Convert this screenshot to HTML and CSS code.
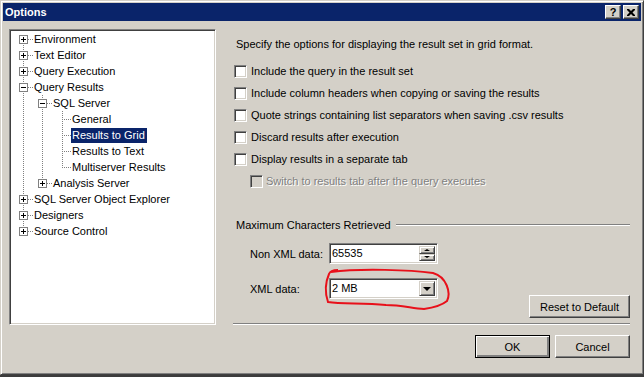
FILE: index.html
```html
<!doctype html>
<html>
<head>
  <link rel="stylesheet" href="styles.css">
</head>
<body>
  <div class="window">
    <div class="titlebar">
      <span class="title">Options</span>
      <span class="capbtn help">?</span>
      <span class="capbtn close">
        <svg width="8" height="7" viewBox="0 0 8 7"><path d="M0 0h2l2 2 2-2h2v1l-2.5 2.5 2.5 2.5v1h-2l-2-2-2 2h-2v-1l2.5-2.5-2.5-2.5z" fill="#000"/></svg>
      </span>
    </div>

    <div class="client">
      <div class="main">
        <div class="tree">
          <svg class="treelines" width="202" height="220">
            <g class="dots">
              <line x1="12.5" y1="8" x2="12.5" y2="201"/>
              <line x1="31.5" y1="64" x2="31.5" y2="153"/>
              <line x1="51.5" y1="80" x2="51.5" y2="137"/>
              <line x1="17" y1="8.5" x2="22" y2="8.5"/>
              <line x1="17" y1="24.5" x2="22" y2="24.5"/>
              <line x1="17" y1="40.5" x2="22" y2="40.5"/>
              <line x1="17" y1="56.5" x2="22" y2="56.5"/>
              <line x1="17" y1="168.5" x2="22" y2="168.5"/>
              <line x1="17" y1="184.5" x2="22" y2="184.5"/>
              <line x1="17" y1="200.5" x2="22" y2="200.5"/>
              <line x1="36" y1="72.5" x2="41" y2="72.5"/>
              <line x1="36" y1="152.5" x2="41" y2="152.5"/>
              <line x1="53" y1="88.5" x2="60" y2="88.5"/>
              <line x1="53" y1="104.5" x2="60" y2="104.5"/>
              <line x1="53" y1="120.5" x2="60" y2="120.5"/>
              <line x1="53" y1="136.5" x2="60" y2="136.5"/>
            </g>
            <g class="boxes">
              <rect x="8.5" y="4.5" width="8" height="8"/>
              <rect x="8.5" y="20.5" width="8" height="8"/>
              <rect x="8.5" y="36.5" width="8" height="8"/>
              <rect x="8.5" y="52.5" width="8" height="8"/>
              <rect x="8.5" y="164.5" width="8" height="8"/>
              <rect x="8.5" y="180.5" width="8" height="8"/>
              <rect x="8.5" y="196.5" width="8" height="8"/>
              <rect x="27.5" y="68.5" width="8" height="8"/>
              <rect x="27.5" y="148.5" width="8" height="8"/>
            </g>
            <g class="signs">
              <path d="M10 8.5h5M12.5 6v5"/>
              <path d="M10 24.5h5M12.5 22v5"/>
              <path d="M10 40.5h5M12.5 38v5"/>
              <path d="M10 56.5h5"/>
              <path d="M10 168.5h5M12.5 166v5"/>
              <path d="M10 184.5h5M12.5 182v5"/>
              <path d="M10 200.5h5M12.5 198v5"/>
              <path d="M29 72.5h5"/>
              <path d="M29 152.5h5M31.5 150v5"/>
            </g>
          </svg>
          <div class="node l0">Environment</div>
          <div class="node l0">Text Editor</div>
          <div class="node l0">Query Execution</div>
          <div class="node l0">Query Results</div>
          <div class="node l1">SQL Server</div>
          <div class="node l2">General</div>
          <div class="node l2"><span class="selected">Results to Grid</span></div>
          <div class="node l2">Results to Text</div>
          <div class="node l2">Multiserver Results</div>
          <div class="node l1">Analysis Server</div>
          <div class="node l0">SQL Server Object Explorer</div>
          <div class="node l0">Designers</div>
          <div class="node l0">Source Control</div>
        </div>

        <div class="page">
          <div class="desc">Specify the options for displaying the result set in grid format.</div>

          <div class="options">
            <div class="option"><span class="check"></span>Include the query in the result set</div>
            <div class="option"><span class="check"></span>Include column headers when copying or saving the results</div>
            <div class="option"><span class="check"></span>Quote strings containing list separators when saving .csv results</div>
            <div class="option"><span class="check"></span>Discard results after execution</div>
            <div class="option"><span class="check"></span>Display results in a separate tab</div>
            <div class="option sub disabled"><span class="check"></span>Switch to results tab after the query executes</div>
          </div>

          <div class="group">
            <span class="group-title">Maximum Characters Retrieved</span>
            <span class="group-line"></span>
          </div>

          <div class="fields">
            <div class="field-list">
              <div class="field">
                <span class="field-label">Non XML data:</span>
                <div class="input">
                  <span class="value">65535</span>
                  <span class="spin">
                    <span class="spinbtn"><span class="arrow-up"></span></span>
                    <span class="spinbtn"><span class="arrow-down"></span></span>
                  </span>
                </div>
              </div>
              <div class="field combo-row">
                <span class="field-label">XML data:</span>
                <div class="input">
                  <span class="value">2 MB</span>
                  <span class="dropbtn"><span class="arrow-drop"></span></span>
                </div>
              </div>
            </div>
            <button class="btn reset">Reset to Default</button>
          </div>

          <div class="separator"></div>
        </div>
      </div>

      <div class="footer">
        <button class="btn default">OK</button>
        <button class="btn">Cancel</button>
      </div>
    </div>

    <!-- red marker drawn over the XML data box -->
    <svg class="marker" width="644" height="377">
      <path d="M330 271 C360 267, 410 269, 432 272 C446 276, 450 292, 446 300 C440 305, 430 307, 423 308 C410 307, 400 304, 385 304 C360 302, 340 303, 327 301 C324 292, 324 282, 328 273 C329 270, 333 269, 337 269"/>
    </svg>
  </div>
</body>
</html>
```

FILE: styles.css
```css
body{
  margin: 0;
  background-color: #3c3c3c;
  font-family: "Liberation Sans", Arial, sans-serif;
  font-size: 11px;
  color: #000000;
}
.window{
  position: relative;
  width: 644px;
  height: 375px;
  box-sizing: border-box;
  background-color: #d4d0c8;
  border: 1px solid;
  border-color: #d4d0c8 #404040 #404040 #d4d0c8;
  box-shadow: inset 1px 1px #ffffff, inset -1px -1px #808080;
  padding: 2px;
}
.titlebar{
  height: 18px;
  background-color: #0a246a;
  display: flex;
  align-items: flex-start;
  padding-right: 2px;
}
.title{
  flex: 1;
  color: #ffffff;
  font-weight: bold;
  line-height: 18px;
  padding-left: 2px;
}
.capbtn{
  width: 16px;
  height: 14px;
  margin-top: 2px;
  box-sizing: border-box;
  background-color: #d4d0c8;
  border: 1px solid;
  border-color: #ffffff #404040 #404040 #ffffff;
  box-shadow: inset -1px -1px #808080;
  display: flex;
  align-items: center;
  justify-content: center;
}
.help{
  font-weight: bold;
  font-size: 11px;
  line-height: 12px;
  margin-right: 2px;
}
.close svg{
  display: block;
}

.client{
  padding: 8px 11px 0 6px;
}
.main{
  display: flex;
  height: 296px;
}

/* tree */
.tree{
  position: relative;
  width: 207px;
  box-sizing: border-box;
  background-color: #ffffff;
  border: 1px solid;
  border-color: #808080 #ffffff #ffffff #808080;
  box-shadow: inset 1px 1px #404040, inset -1px -1px #d4d0c8;
  padding: 1px;
}
.treelines{
  position: absolute;
  top: 1px;
  left: 1px;
}
.dots line{
  stroke: #808080;
  stroke-width: 1;
  stroke-dasharray: 1 1;
}
.boxes rect{
  fill: #ffffff;
  stroke: #808080;
  stroke-width: 1;
}
.signs path{
  stroke: #000000;
  stroke-width: 1;
  fill: none;
}
.node{
  position: relative;
  height: 16px;
  line-height: 16px;
  white-space: nowrap;
}
.l0{ padding-left: 23px; }
.l1{ padding-left: 42px; }
.l2{ padding-left: 61px; }
.selected{
  display: inline-block;
  background-color: #0a246a;
  color: #ffffff;
  line-height: 15px;
  padding: 0 2px 0 1px;
  margin-left: -1px;
}

/* right page */
.page{
  flex: 1;
  margin-left: 17px;
  display: flex;
  flex-direction: column;
}
.desc{
  margin-top: 7px;
  padding-left: 3px;
  line-height: 16px;
}
.options{
  margin-top: 8px;
}
.option{
  height: 22px;
  display: flex;
  align-items: center;
  white-space: nowrap;
}
.check{
  width: 13px;
  height: 13px;
  box-sizing: border-box;
  background-color: #ffffff;
  border: 1px solid;
  border-color: #808080 #ffffff #ffffff #808080;
  box-shadow: inset 1px 1px #404040, inset -1px -1px #d4d0c8;
  margin-left: 1px;
  margin-right: 4px;
}
.sub .check{
  margin-left: 17px;
  margin-right: 3px;
}
.disabled{
  color: #808080;
  text-shadow: 1px 1px #ffffff;
}
.disabled .check{
  background-color: #d4d0c8;
}

.group{
  margin-top: 25px;
  display: flex;
  align-items: center;
  line-height: 16px;
}
.group-title{
  padding-left: 3px;
  padding-right: 5px;
}
.group-line{
  flex: 1;
  height: 0;
  border-top: 1px solid #808080;
  border-bottom: 1px solid #ffffff;
}

.fields{
  margin-top: 10px;
  height: 75px;
  display: flex;
  justify-content: space-between;
}
.field{
  display: flex;
  align-items: center;
  height: 21px;
}
.combo-row{
  margin-top: 14px;
}
.field-label{
  width: 79px;
  padding-left: 17px;
}
.input{
  width: 109px;
  height: 21px;
  box-sizing: border-box;
  background-color: #ffffff;
  border: 1px solid;
  border-color: #808080 #ffffff #ffffff #808080;
  box-shadow: inset 1px 1px #404040, inset -1px -1px #d4d0c8;
  padding: 2px;
  display: flex;
  align-items: stretch;
}
.value{
  flex: 1;
  line-height: 15px;
  padding-left: 0;
}
.spin{
  width: 16px;
  display: flex;
  flex-direction: column;
}
.spinbtn, .dropbtn{
  box-sizing: border-box;
  background-color: #d4d0c8;
  border: 1px solid;
  border-color: #d4d0c8 #404040 #404040 #d4d0c8;
  box-shadow: inset 1px 1px #ffffff, inset -1px -1px #808080;
  display: flex;
  align-items: center;
  justify-content: center;
}
.spinbtn{
  flex: 1;
}
.dropbtn{
  width: 16px;
}
.arrow-up{
  border-left: 3px solid transparent;
  border-right: 3px solid transparent;
  border-bottom: 2px solid #000000;
}
.arrow-down{
  border-left: 3px solid transparent;
  border-right: 3px solid transparent;
  border-top: 2px solid #000000;
}
.arrow-drop{
  border-left: 4px solid transparent;
  border-right: 4px solid transparent;
  border-top: 4px solid #000000;
}

.btn{
  font-family: "Liberation Sans", Arial, sans-serif;
  font-size: 11px;
  color: #000000;
  height: 23px;
  width: 75px;
  box-sizing: border-box;
  background-color: #d4d0c8;
  border: 1px solid;
  border-color: #ffffff #404040 #404040 #ffffff;
  box-shadow: inset -1px -1px #808080;
  padding: 0;
}
.reset{
  width: 101px;
  align-self: flex-end;
}
.default{
  border-color: #000000;
  box-shadow: inset 1px 1px #ffffff, inset -2px -2px #808080;
}

.separator{
  margin-top: auto;
  border-top: 1px solid #808080;
  border-bottom: 1px solid #ffffff;
}

.footer{
  margin-top: 10px;
  display: flex;
  justify-content: flex-end;
  gap: 5px;
}

.marker{
  position: absolute;
  top: 0;
  left: 0;
  pointer-events: none;
}
.marker path{
  fill: none;
  stroke: #e8101a;
  stroke-width: 2;
}
```
